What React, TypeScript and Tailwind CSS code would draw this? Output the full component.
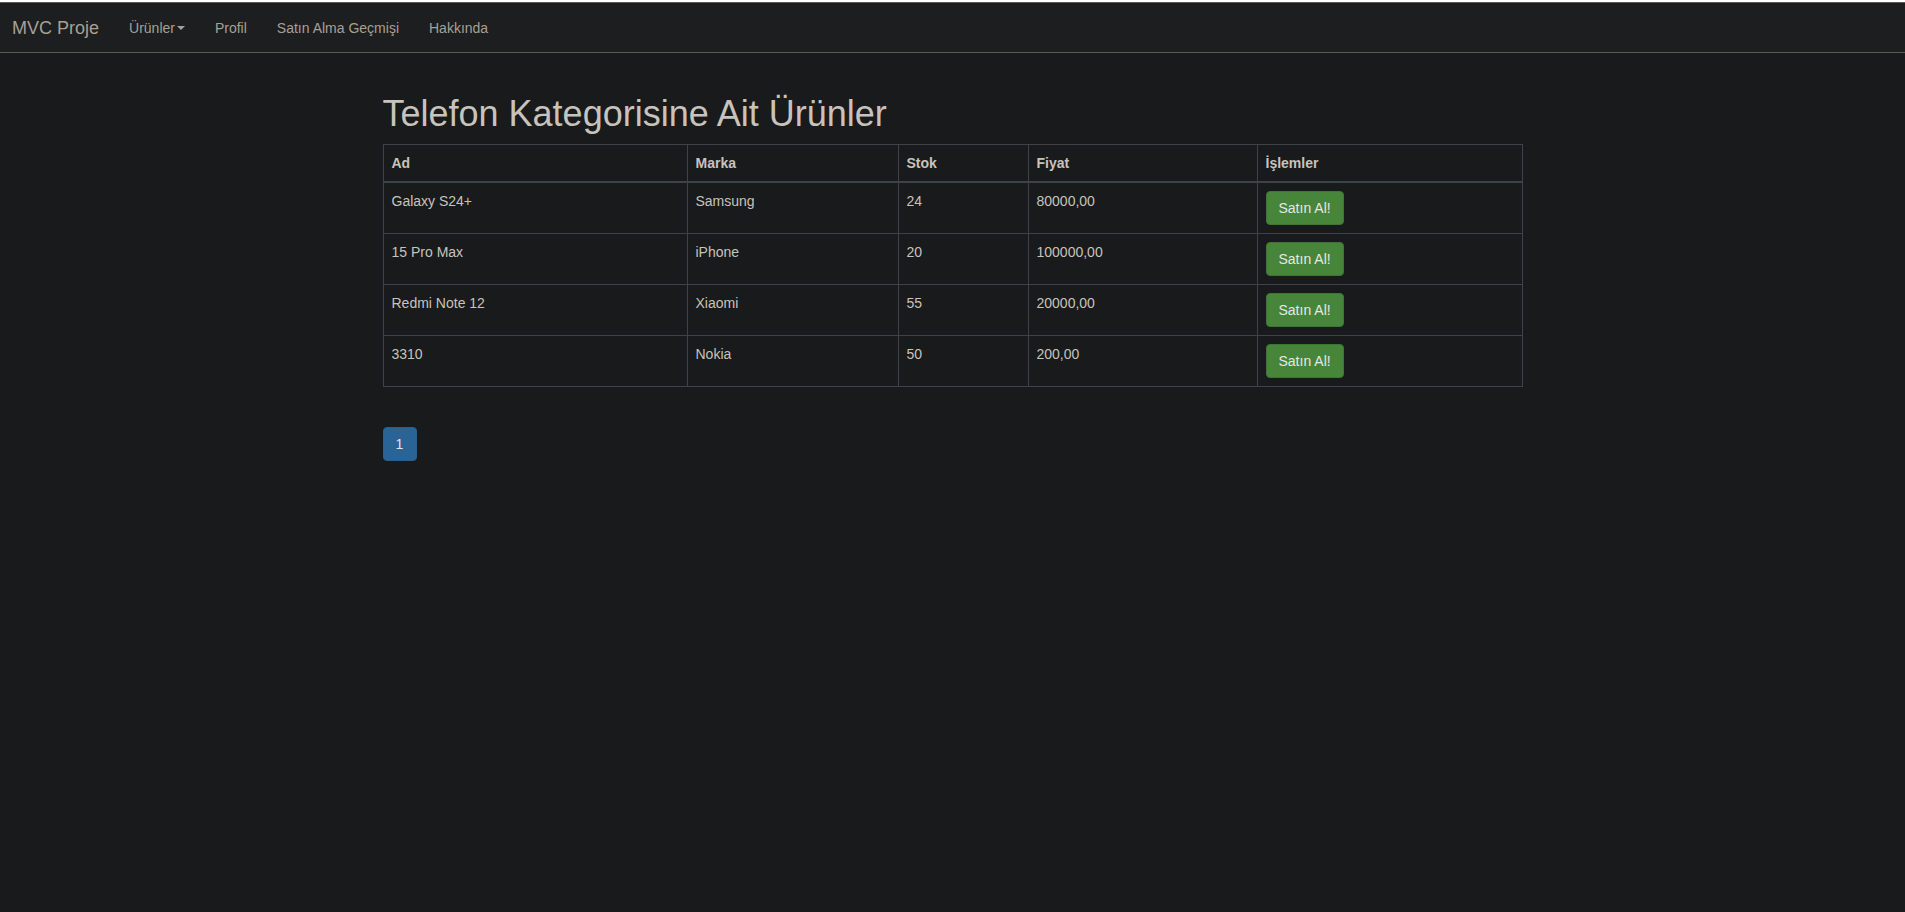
const products = [
  { ad: "Galaxy S24+", marka: "Samsung", stok: 24, fiyat: "80000,00" },
  { ad: "15 Pro Max", marka: "iPhone", stok: 20, fiyat: "100000,00" },
  { ad: "Redmi Note 12", marka: "Xiaomi", stok: 55, fiyat: "20000,00" },
  { ad: "3310", marka: "Nokia", stok: 50, fiyat: "200,00" },
];

function Navbar() {
  return (
    <nav className="mt-[2px] border-y border-[#5f5a52] bg-[#1c1e1f]">
      <div className="flex h-[49px] items-center pl-[12px]">
        <a className="pr-[15px] text-[18px] leading-[20px] text-[#a8a095]">MVC Proje</a>
        <ul className="flex text-[14px] leading-[20px] text-[#a8a095]">
          <li className="flex items-center px-[15px]">
            Ürünler
            <span className="ml-[2px] inline-block h-0 w-0 border-x-[4px] border-t-[4px] border-x-transparent border-t-[#a8a095]" />
          </li>
          <li className="px-[15px]">Profil</li>
          <li className="px-[15px]">Satın Alma Geçmişi</li>
          <li className="px-[15px]">Hakkında</li>
        </ul>
      </div>
    </nav>
  );
}

export default function App() {
  return (
    <div
      className="min-h-[912px] bg-[#181a1b] text-[14px] leading-[20px] text-[#c8c3bc]"
      style={{ fontFamily: '"Liberation Sans", Arial, sans-serif' }}
    >
      <Navbar />
      <div className="mx-auto w-[1170px] px-[15px] pt-[41px]">
        <h1 className="mb-[10px] text-[36px] leading-[39.6px] text-[#c8c3bc]">
          Telefon Kategorisine Ait Ürünler
        </h1>
        <table className="w-full table-fixed border-collapse border border-[#3e4446]">
          <colgroup>
            <col className="w-[304px]" />
            <col className="w-[211px]" />
            <col className="w-[130px]" />
            <col className="w-[229px]" />
            <col />
          </colgroup>
          <thead>
            <tr className="text-left font-bold">
              <th className="border border-b-2 border-[#3e4446] p-[8px]">Ad</th>
              <th className="border border-b-2 border-[#3e4446] p-[8px]">Marka</th>
              <th className="border border-b-2 border-[#3e4446] p-[8px]">Stok</th>
              <th className="border border-b-2 border-[#3e4446] p-[8px]">Fiyat</th>
              <th className="border border-b-2 border-[#3e4446] p-[8px]">İşlemler</th>
            </tr>
          </thead>
          <tbody>
            {products.map((p) => (
              <tr key={p.ad} className="align-top">
                <td className="border border-[#3e4446] p-[8px]">{p.ad}</td>
                <td className="border border-[#3e4446] p-[8px]">{p.marka}</td>
                <td className="border border-[#3e4446] p-[8px]">{p.stok}</td>
                <td className="border border-[#3e4446] p-[8px]">{p.fiyat}</td>
                <td className="border border-[#3e4446] p-[8px]">
                  <button className="h-[34px] rounded-[4px] border border-[#3d7533] bg-[#46853a] px-[12px] text-[14px] text-[#e8e6e3]">
                    Satın Al!
                  </button>
                </td>
              </tr>
            ))}
          </tbody>
        </table>
        <div className="mt-[40px] flex">
          <span className="flex h-[34px] w-[34px] items-center justify-center rounded-[4px] border border-[#28608f] bg-[#2a6496] text-[#e8e6e3]">
            1
          </span>
        </div>
      </div>
    </div>
  );
}
